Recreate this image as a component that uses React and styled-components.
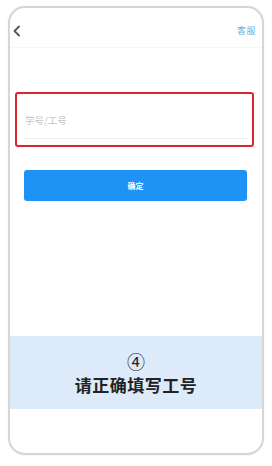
import React from 'react';
import styled, { createGlobalStyle } from 'styled-components';

const GlobalStyle = createGlobalStyle`
  html, body {
    margin: 0;
    padding: 0;
    background: #ffffff;
    font-family: "Noto Sans CJK SC", "Noto Sans", sans-serif;
  }
`;

const Page = styled.div`
  width: 272px;
  height: 466px;
  padding: 6px 8px 0 8px;
  box-sizing: border-box;
`;

const Phone = styled.div`
  width: 256px;
  height: 449px;
  box-sizing: border-box;
  border: 2px solid #d6d6d6;
  border-radius: 17px;
  box-shadow: 0 0 2px rgba(0, 0, 0, 0.08);
  overflow: hidden;
  display: flex;
  flex-direction: column;
  background: #fff;
`;

const Header = styled.div`
  height: 40px;
  flex-shrink: 0;
  display: flex;
  align-items: center;
  justify-content: space-between;
  padding: 6px 6px 0 2px;
  box-sizing: border-box;
  border-bottom: 1px solid #f6f6f6;
`;

const Back = styled.svg`
  width: 10px;
  height: 12px;
`;

const Service = styled.span`
  font-size: 9px;
  color: #5cb2ec;
  letter-spacing: 0.5px;
`;

const Body = styled.div`
  display: flex;
  flex-direction: column;
  align-items: stretch;
  padding-top: 44px;
`;

const InputHighlight = styled.div`
  margin: 0 8px 0 5px;
  height: 55px;
  box-sizing: border-box;
  border: 2px solid #d7282f;
  border-radius: 3px;
  display: flex;
  align-items: flex-end;
  padding: 0 5px 6px 7px;
`;

const Field = styled.div`
  flex: 1;
  height: 30px;
  display: flex;
  align-items: center;
  border-bottom: 1px solid #ececec;
  font-size: 9.5px;
  color: #c4c4c4;
  padding-left: 1px;
  padding-bottom: 3px;
`;

const Button = styled.div`
  margin: 23px 15px 0 14px;
  height: 31px;
  border-radius: 3px;
  background: #1e93f5;
  color: #ffffff;
  font-size: 8px;
  font-weight: 700;
  display: flex;
  align-items: center;
  justify-content: center;
`;

const Banner = styled.div`
  margin-top: 135px;
  height: 73px;
  background: #dceafa;
  display: flex;
  flex-direction: column;
  align-items: center;
  justify-content: center;
  color: #222;
  box-sizing: border-box;
`;

const Step = styled.div`
  font-size: 18px;
  line-height: 20px;
  font-family: "Noto Sans CJK SC", "DejaVu Sans", sans-serif;
  font-weight: 400;
`;

const Caption = styled.div`
  font-size: 17px;
  line-height: 20px;
  font-weight: 700;
  margin-top: 4px;
  letter-spacing: 0.5px;
`;

export default function App() {
  return (
    <>
      <GlobalStyle />
      <Page>
        <Phone>
          <Header>
            <Back viewBox="0 0 10 12">
              <path d="M7 1.5 L2.5 6 L7 10.5" fill="none" stroke="#555" strokeWidth="1.8" strokeLinecap="round" strokeLinejoin="round" />
            </Back>
            <Service>客服</Service>
          </Header>
          <Body>
            <InputHighlight>
              <Field>学号/工号</Field>
            </InputHighlight>
            <Button>确定</Button>
            <Banner>
              <Step>④</Step>
              <Caption>请正确填写工号</Caption>
            </Banner>
          </Body>
        </Phone>
      </Page>
    </>
  );
}
